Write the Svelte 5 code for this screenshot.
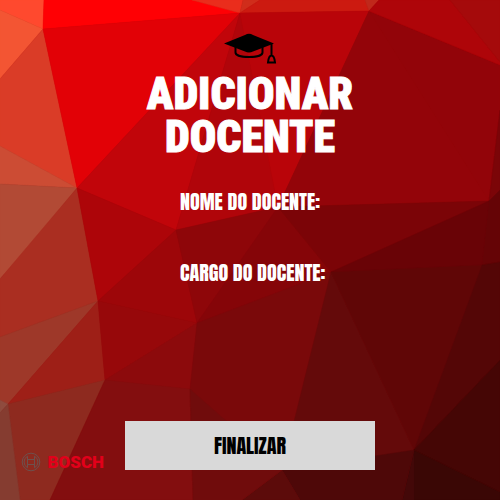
<script>
  const facets = [
    ['0,0 44,0 43,29 0,10', '#ff492e'],
    ['0,10 43,29 0,79', '#f35533'],
    ['0,79 43,29 77,188 0,146', '#da3c27'],
    ['0,146 77,188 0,184', '#cc4c34'],
    ['0,184 77,188 26,250 0,279', '#b24a35'],
    ['77,188 98,301 0,337 0,279', '#aa2e21'],
    ['98,301 8,404 0,400 0,337', '#9e3829'],
    ['98,301 105,380 8,404', '#9e1f17'],
    ['8,404 105,380 50,500 20,500', '#8e2a1f'],
    ['0,400 8,404 0,413', '#8f4b3e'],
    ['0,413 8,404 20,500 0,500', '#853c30'],
    ['44,0 192,0 240,13 43,29', '#ff0004'],
    ['192,0 243,0 240,13', '#ea2d1c'],
    ['243,0 260,0 240,13', '#d02d1b'],
    ['260,0 365,0 369,11 240,13', '#cc1a10'],
    ['365,0 379,0 369,11', '#c0281b'],
    ['43,29 240,13 77,188', '#e20106'],
    ['77,188 240,13 176,230', '#c1050a'],
    ['240,13 278,207 176,230', '#b0050a'],
    ['240,13 369,11 278,207', '#b90409'],
    ['369,11 489,201 278,207', '#930409'],
    ['369,11 500,65 500,110 489,201', '#920409'],
    ['379,0 450,0 500,62 500,65 369,11', '#ae0509'],
    ['450,0 500,0 500,62', '#a50a0b'],
    ['500,110 489,201 500,190', '#7b0508'],
    ['77,188 176,230 98,301', '#ad0509'],
    ['176,230 98,301 197,323', '#9d0609'],
    ['176,230 278,207 197,323', '#8e0609'],
    ['278,207 331,272 197,323', '#850508'],
    ['278,207 489,201 331,272', '#7b0407'],
    ['489,201 482,265 331,272', '#690306'],
    ['489,201 500,190 500,262 482,265', '#650406'],
    ['98,301 197,323 105,380', '#97080a'],
    ['197,323 190,389 105,380', '#8c0a0c'],
    ['197,323 331,272 282,470 190,389', '#7a090a'],
    ['331,272 414,450 282,470', '#640a0a'],
    ['331,272 482,265 414,450', '#600606'],
    ['482,265 500,262 500,360 414,450', '#540606'],
    ['414,450 500,360 500,492', '#450605'],
    ['414,450 500,492 500,500 414,500', '#3a0705'],
    ['414,450 402,500 414,500', '#430808'],
    ['282,470 414,450 402,500 300,500', '#4e0808'],
    ['282,470 300,500 242,500', '#5c0b0a'],
    ['105,380 190,389 193,500 50,500', '#830e0f'],
    ['190,389 282,470 242,500 193,500', '#700c0c'],
  ];

  let nome = $state('');
  let cargo = $state('');
</script>

<main>
  <svg class="backdrop" viewBox="0 0 500 500" preserveAspectRatio="none" aria-hidden="true">
    {#each facets as [points, color]}
      <polygon {points} fill={color} stroke={color} />
    {/each}
  </svg>

  <header>
    <svg class="cap" viewBox="0 0 54 32" aria-hidden="true">
      <path d="M1 10.5 22 2Q26-.5 30 2L51 10.5 30 18.500Q26 20.500 22 18.500Z" />
      <path class="line" d="M12.500 14v5.500c0 6 27 6 27 0V14M48.500 11v12M48.500 22.500c-2 0-3 2-3.500 7h7c-.5-5-1.500-7-3.500-7Z" />
    </svg>
    <h1>Adicionar docente</h1>
  </header>

  <form onsubmit={(event) => event.preventDefault()}>
    <div class="fields">
      <div class="field">
        <label for="nome">Nome do docente:</label>
        <input id="nome" type="text" bind:value={nome} />
      </div>
      <div class="field">
        <label for="cargo">Cargo do docente:</label>
        <input id="cargo" type="text" bind:value={cargo} />
      </div>
    </div>

    <div class="actions">
      <div class="brand">
        <svg viewBox="0 0 20 20" aria-hidden="true">
          <circle cx="10" cy="10" r="8.800" />
          <path d="M6.500 4.200v11.600M13.500 4.200v11.600M6.500 7.500h7M6.500 12.500h7M6.500 4.200a6.600 6.600 0 0 0 0 11.600M13.500 4.200a6.600 6.600 0 0 1 0 11.600" />
        </svg>
        <span>BOSCH</span>
      </div>
      <button type="submit">Finalizar</button>
    </div>
  </form>
</main>

<style>
  :global(body) {
    margin: 0;
  }

  main {
    position: relative;
    box-sizing: border-box;
    display: flex;
    flex-direction: column;
    min-height: 100vh;
    padding: 33px 0 30px;
    overflow: hidden;
    background: #930409;
    color: #fff;
    font-family: Anton, 'Roboto Condensed', sans-serif;
  }

  .backdrop {
    position: absolute;
    inset: 0;
    width: 100%;
    height: 100%;
  }

  .backdrop polygon {
    stroke-width: 0.5;
  }

  header,
  form {
    position: relative;
  }

  header {
    display: flex;
    flex-direction: column;
    align-items: center;
    gap: 8px;
  }

  .cap {
    width: 54px;
    height: 32px;
  }

  .cap .line {
    fill: none;
    stroke: #000;
    stroke-width: 2;
  }

  h1 {
    max-width: 260px;
    margin: 0;
    font-family: 'Roboto Condensed', sans-serif;
    font-size: 44px;
    font-weight: 900;
    line-height: 43px;
    text-align: center;
    text-transform: uppercase;
    -webkit-text-stroke: 1px #fff;
  }

  form {
    display: flex;
    flex: 1;
    flex-direction: column;
    justify-content: space-between;
  }

  .fields {
    display: flex;
    flex-direction: column;
    gap: 5px;
    width: 40%;
    margin-left: 36%;
    padding-top: 28px;
  }

  .field {
    display: flex;
    flex-direction: column;
  }

  label {
    font-size: 20px;
    line-height: 30px;
    text-transform: uppercase;
    white-space: nowrap;
  }

  input {
    box-sizing: border-box;
    width: 100%;
    height: 36px;
    padding: 0 4px;
    border: 0;
    background: transparent;
    color: #fff;
    font: 20px 'Roboto Condensed', sans-serif;
  }

  .actions {
    display: grid;
    grid-template-columns: 1fr 2fr 1fr;
    align-items: end;
  }

  .brand {
    display: flex;
    align-items: center;
    justify-content: flex-end;
    gap: 7px;
    margin-bottom: -2px;
    padding-right: 21px;
    color: #e2001a;
    font-family: Roboto, sans-serif;
    font-size: 17px;
    font-weight: 900;
    line-height: 20px;
  }

  .brand svg {
    width: 20px;
    height: 20px;
    fill: none;
    stroke: #6e504d;
    stroke-width: 1;
  }

  button {
    height: 49px;
    padding: 0;
    border: 0;
    background: #d9d9d9;
    color: #000;
    font: 20px/30px Anton, sans-serif;
    text-transform: uppercase;
    cursor: pointer;
  }
</style>
